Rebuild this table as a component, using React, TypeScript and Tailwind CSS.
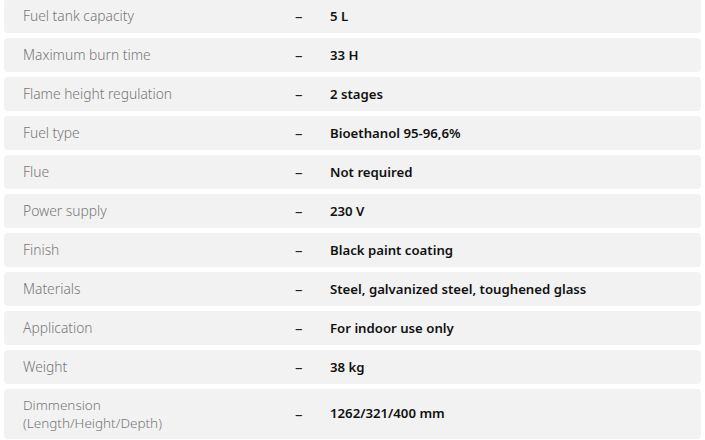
import React from "react";

const rows: [string, string][] = [
  ["Fuel tank capacity", "5 L"],
  ["Maximum burn time", "33 H"],
  ["Flame height regulation", "2 stages"],
  ["Fuel type", "Bioethanol 95-96,6%"],
  ["Flue", "Not required"],
  ["Power supply", "230 V"],
  ["Finish", "Black paint coating"],
  ["Materials", "Steel, galvanized steel, toughened glass"],
  ["Application", "For indoor use only"],
  ["Weight", "38 kg"],
];

export default function App() {
  return (
    <div className="w-[705px] h-[440px] overflow-hidden bg-white" style={{ fontFamily: '"Noto Sans", sans-serif' }}>
      <div className="mt-[-1px] px-1 flex flex-col gap-[5px]">
        {rows.map(([l, v]) => (
          <div key={l} className="h-[34px] rounded-[4px] bg-[#f2f2f2] flex items-center">
            <div className="w-[291px] pl-[19px] text-[13.8px] text-[#777] font-light pt-px">{l}</div>
            <div className="w-[35px] text-[15px] text-[#222]">–</div>
            <div className="text-[13.2px] font-semibold text-[#111] pt-px">{v}</div>
          </div>
        ))}
        <div className="h-[50px] rounded-[4px] bg-[#f2f2f2] flex items-center">
          <div className="w-[291px] pl-[19px] text-[13.5px] leading-[18px] text-[#777] font-light">
            Dimmension
            <br />
            (Length/Height/Depth)
          </div>
          <div className="w-[35px] text-[15px] text-[#222]">–</div>
          <div className="text-[13.2px] font-semibold text-[#111]">1262/321/400 mm</div>
        </div>
      </div>
    </div>
  );
}
